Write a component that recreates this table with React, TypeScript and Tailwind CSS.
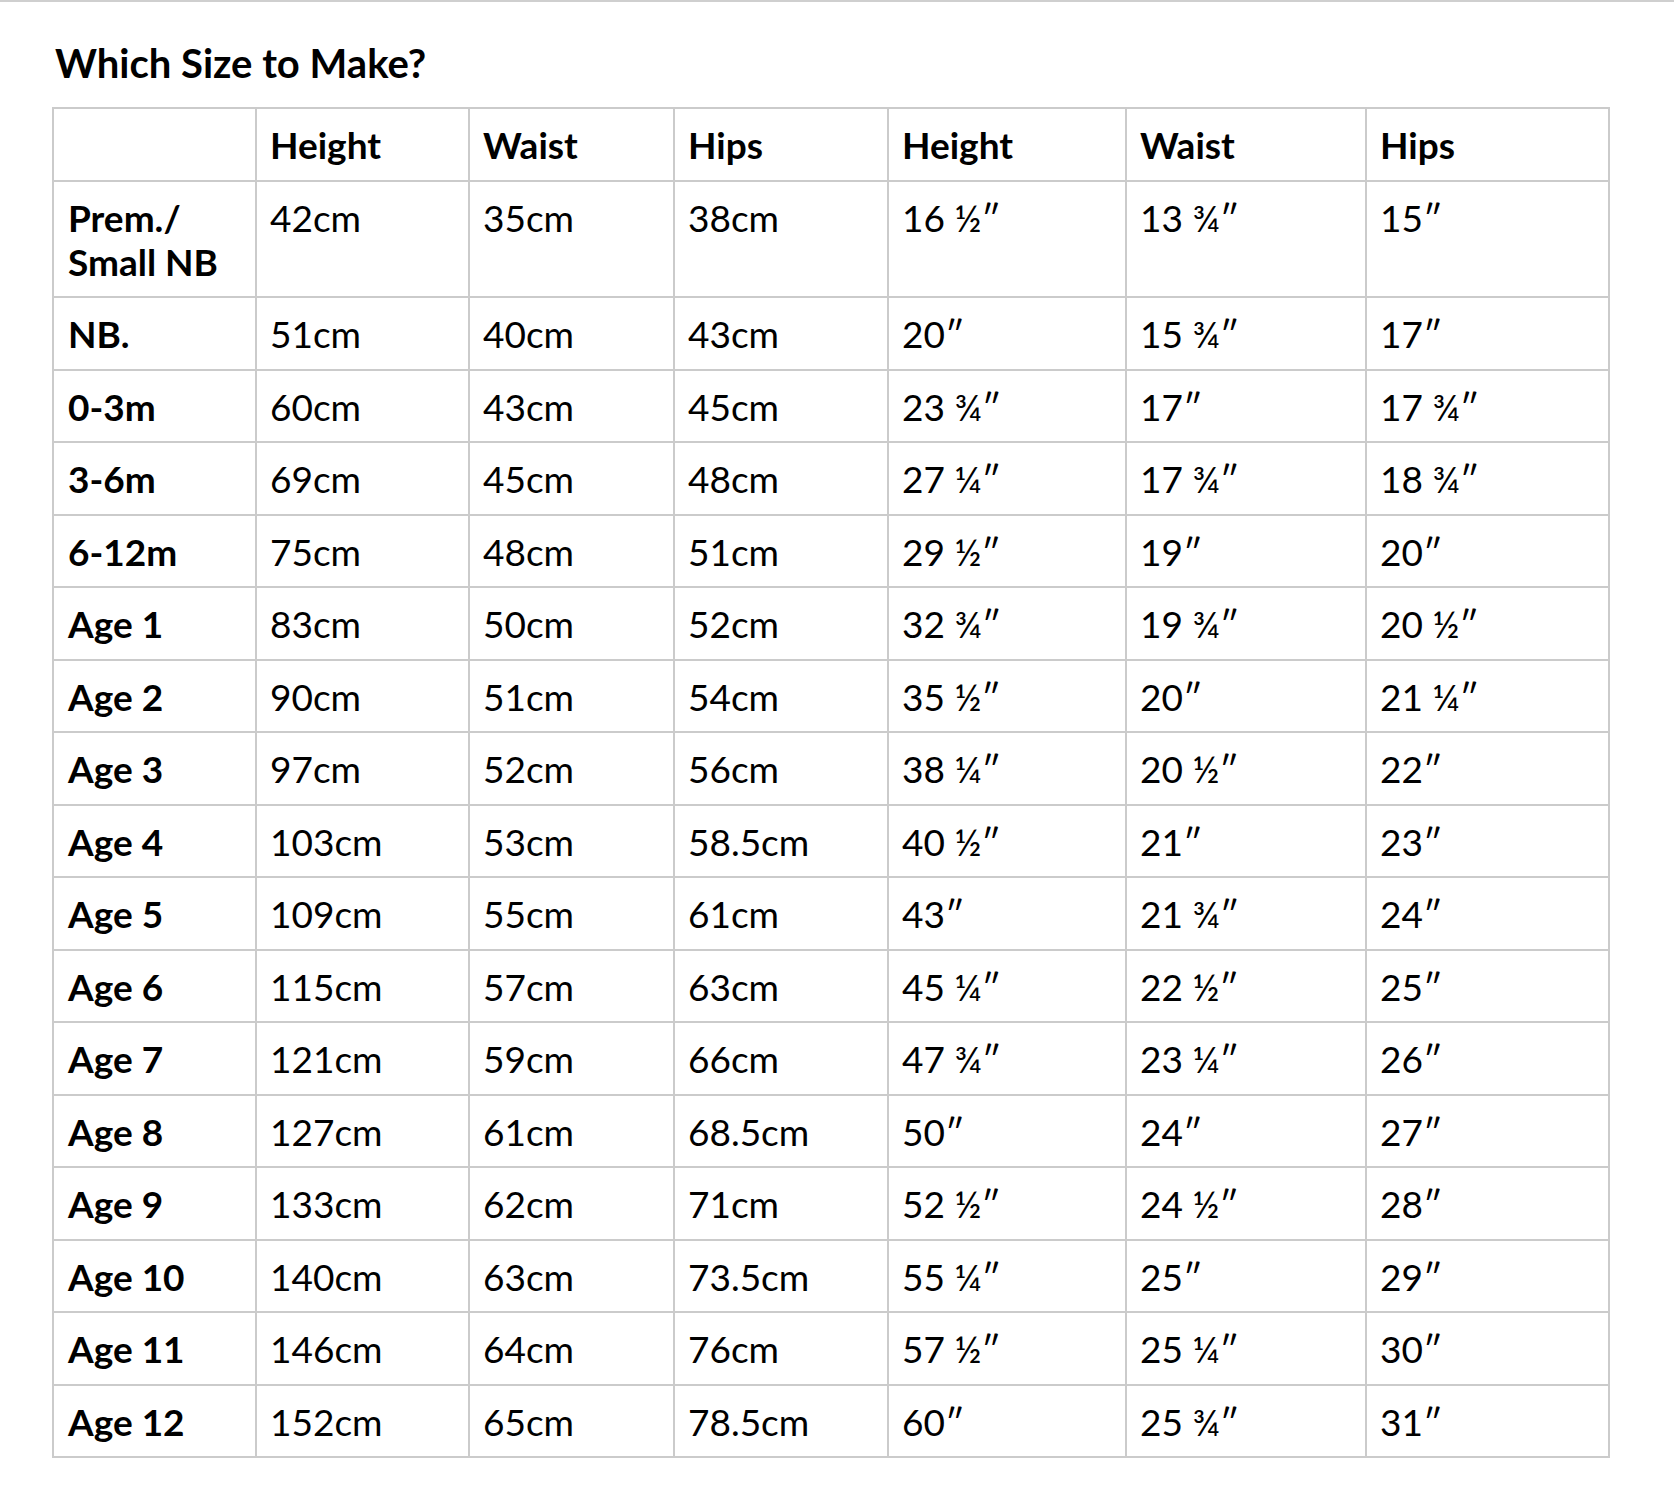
const rows: [string, string, string, string, string, string, string][] = [
  ['Prem./\nSmall NB', '42cm', '35cm', '38cm', '16 ½″', '13 ¾″', '15″'],
  ['NB.', '51cm', '40cm', '43cm', '20″', '15 ¾″', '17″'],
  ['0-3m', '60cm', '43cm', '45cm', '23 ¾″', '17″', '17 ¾″'],
  ['3-6m', '69cm', '45cm', '48cm', '27 ¼″', '17 ¾″', '18 ¾″'],
  ['6-12m', '75cm', '48cm', '51cm', '29 ½″', '19″', '20″'],
  ['Age 1', '83cm', '50cm', '52cm', '32 ¾″', '19 ¾″', '20 ½″'],
  ['Age 2', '90cm', '51cm', '54cm', '35 ½″', '20″', '21 ¼″'],
  ['Age 3', '97cm', '52cm', '56cm', '38 ¼″', '20 ½″', '22″'],
  ['Age 4', '103cm', '53cm', '58.5cm', '40 ½″', '21″', '23″'],
  ['Age 5', '109cm', '55cm', '61cm', '43″', '21 ¾″', '24″'],
  ['Age 6', '115cm', '57cm', '63cm', '45 ¼″', '22 ½″', '25″'],
  ['Age 7', '121cm', '59cm', '66cm', '47 ¾″', '23 ¼″', '26″'],
  ['Age 8', '127cm', '61cm', '68.5cm', '50″', '24″', '27″'],
  ['Age 9', '133cm', '62cm', '71cm', '52 ½″', '24 ½″', '28″'],
  ['Age 10', '140cm', '63cm', '73.5cm', '55 ¼″', '25″', '29″'],
  ['Age 11', '146cm', '64cm', '76cm', '57 ½″', '25 ¼″', '30″'],
  ['Age 12', '152cm', '65cm', '78.5cm', '60″', '25 ¾″', '31″'],
];

const headers = ['', 'Height', 'Waist', 'Hips', 'Height', 'Waist', 'Hips'];

const cell =
  'border-2 border-[#cbcbcb] align-top pt-[14px] pb-[12.5px] pl-[13px] pr-2 leading-[44px] text-[37px] text-black';

const SizeChart = () => {
  return (
    <div className="min-h-screen bg-white font-['Lato',sans-serif]">
      <div className="h-[2px] bg-[#cfcfcf]" />
      <div className="pl-[52px] pt-[38px]">
        <h2 className="text-[40px] leading-[47px] font-bold text-black pl-[3px] mb-[20px]">Which Size to Make?</h2>

        <table className="table-fixed border-collapse w-[1556px]">
          <colgroup>
            <col className="w-[203px]" />
            <col className="w-[213px]" />
            <col className="w-[205px]" />
            <col className="w-[214px]" />
            <col className="w-[238px]" />
            <col className="w-[240px]" />
            <col className="w-[243px]" />
          </colgroup>
          <thead>
            <tr>
              {headers.map((h, i) => (
                <th key={i} className={`${cell} text-left font-bold`}>
                  {h}
                </th>
              ))}
            </tr>
          </thead>
          <tbody>
            {rows.map((r) => (
              <tr key={r[0]}>
                {/* first column is the size label */}
                <td className={`${cell} font-bold whitespace-pre-line pl-[14px]`}>{r[0]}</td>
                {r.slice(1).map((v, i) => (
                  <td key={i} className={`${cell} font-normal`}>
                    {v}
                  </td>
                ))}
              </tr>
            ))}
          </tbody>
        </table>
      </div>
    </div>
  );
};

export default function App() {
  return <SizeChart />;
}
